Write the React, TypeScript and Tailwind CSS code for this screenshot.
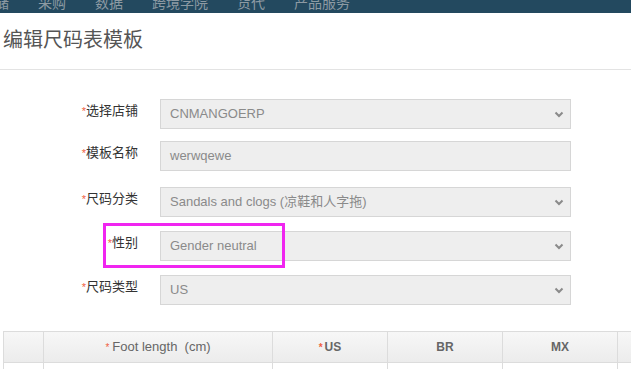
import React from "react";

const navItems = ["仓储", "采购", "数据", "跨境学院", "货代", "产品服务"];

function Chevron() {
  return (
    <svg width="10" height="7" viewBox="0 0 10 7" className="shrink-0">
      <path d="M1.5 1.5 L5 5 L8.5 1.5" fill="none" stroke="#8a8a8a" strokeWidth="2" />
    </svg>
  );
}

function Row({
  label,
  value,
  select,
  className,
}: {
  label: string;
  value: string;
  select?: boolean;
  className?: string;
}) {
  return (
    <div className={`flex items-start ${className ?? ""}`}>
      <div className="w-[140px] pr-[2px] pt-[2px] text-right text-[13px] leading-[20px] text-[#333]">
        <span className="text-[11px] text-[#f0603f]">*</span>
        {label}
      </div>
      <div className="ml-[20px] flex h-[30px] w-[411px] items-center justify-between border border-[#d6d6d6] bg-[#eeeeee] pl-[9px] pr-[6px] text-[13px] text-[#8a8a8a]">
        <span>{value}</span>
        {select && <Chevron />}
      </div>
    </div>
  );
}

export default function App() {
  return (
    <div
      className="relative h-[369px] w-[631px] overflow-hidden bg-white"
      style={{ fontFamily: '"Liberation Sans", "Noto Sans CJK SC", sans-serif' }}
    >
      {/* top nav (scrolled, only bottom visible) */}
      <div className="h-[13px] overflow-hidden bg-[#23495f]">
        <div className="ml-[-19px] mt-[-6px] flex gap-[29px] whitespace-nowrap text-[14px] leading-[18px] text-[#8d9aa3]">
          {navItems.map((n) => (
            <span key={n}>{n}</span>
          ))}
        </div>
      </div>

      {/* title */}
      <div className="h-[57px] border-b border-[#e3e3e3] pl-[3px] pt-[13px]">
        <h1 className="text-[20px] font-normal leading-[28px] text-[#555]">编辑尺码表模板</h1>
      </div>

      {/* form */}
      <div className="pt-[29px]">
        <Row label="选择店铺" value="CNMANGOERP" select />
        <Row className="mt-[12px]" label="模板名称" value="werwqewe" />
        <Row className="mt-[16px]" label="尺码分类" value="Sandals and clogs (凉鞋和人字拖)" select />
        <Row className="mt-[14px]" label="性别" value="Gender neutral" select />
        <Row className="mt-[14px]" label="尺码类型" value="US" select />
      </div>

      {/* table */}
      <div className="ml-[3px] mt-[26px] w-[700px]">
        <div className="flex h-[32px] border border-[#dcdcdc] bg-gradient-to-b from-[#f7f7f7] to-[#ececec] text-[12px] text-[#666]">
          <div className="w-[40px] border-r border-[#dcdcdc]" />
          <div className="flex w-[229px] items-center justify-center border-r border-[#dcdcdc] text-[13px]">
            <span className="mr-[3px] text-[10px] text-[#f0603f]">*</span>Foot length&nbsp;&nbsp;(cm)
          </div>
          <div className="flex w-[115px] items-center justify-center border-r border-[#dcdcdc] font-bold">
            <span className="mr-[2px] text-[10px] text-[#f0603f]">*</span>US
          </div>
          <div className="flex w-[115px] items-center justify-center border-r border-[#dcdcdc] font-bold">BR</div>
          <div className="flex w-[115px] items-center justify-center border-r border-[#dcdcdc] font-bold">MX</div>
          <div className="w-[80px]" />
        </div>
        <div className="flex h-[30px] border-x border-[#dcdcdc]">
          <div className="w-[40px] border-r border-[#dcdcdc]" />
          <div className="w-[229px] border-r border-[#dcdcdc]" />
          <div className="w-[115px] border-r border-[#dcdcdc]" />
          <div className="w-[115px] border-r border-[#dcdcdc]" />
          <div className="w-[115px] border-r border-[#dcdcdc]" />
        </div>
      </div>

      {/* annotation highlight */}
      <div className="absolute left-[103px] top-[223px] h-[45px] w-[182px] border-[3px] border-[#f025f0]" />
    </div>
  );
}
